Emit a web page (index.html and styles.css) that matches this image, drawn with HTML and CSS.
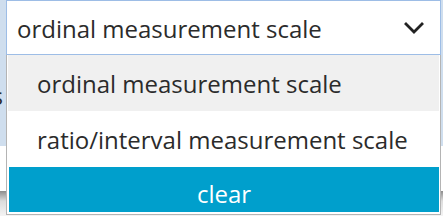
FILE: index.html
```html
<!DOCTYPE html>
<html>
<head>
<meta charset="utf-8">
<link rel="stylesheet" href="styles.css">
</head>
<body>
<div class="page">
  <div class="backdrop">
    <div class="panel"><span class="ghost">s</span></div>
    <div class="gap"></div>
    <div class="footer-bar"></div>
  </div>
  <div class="select">
    <div class="select-box">
      <span class="select-value">ordinal measurement scale</span>
      <svg class="chevron" width="20" height="12" viewBox="0 0 20 12"><path d="M2 2 L10 10 L18 2" fill="none" stroke="#222" stroke-width="2.8" stroke-linecap="square"/></svg>
    </div>
    <ul class="options">
      <li class="option active">ordinal measurement scale</li>
      <li class="option">ratio/interval measurement scale</li>
      <li class="clear"><span>clear</span></li>
    </ul>
  </div>
</div>
</body>
</html>
```
FILE: styles.css
```css
html, body {
  margin: 0;
  padding: 0;
}
body {
  width: 443px;
  height: 216px;
  overflow: hidden;
  font-family: "Open Sans", "Noto Sans", sans-serif;
  color: #2b2b2b;
}
.page {
  position: relative;
  width: 443px;
  height: 216px;
}
.backdrop {
  display: flex;
  flex-direction: column;
  height: 216px;
}
.panel {
  height: 146px;
  background: #cfdeee;
  position: relative;
}
.ghost {
  position: absolute;
  left: -8px;
  top: 80px;
  font-size: 23px;
  color: #2b2b2b;
}
.gap {
  height: 45px;
  background: #ffffff;
}
.footer-bar {
  flex: 1;
  background: linear-gradient(#8c8c8c, #dcdcdc 40%, #f4f4f4);
}
.select {
  position: absolute;
  left: 6px;
  top: 0;
  width: 435px;
}
.select-box {
  box-sizing: border-box;
  height: 55px;
  border: 1px solid #9dbde6;
  background: #fff;
  display: flex;
  align-items: center;
  justify-content: space-between;
  padding: 0 16px 0 10px;
}
.select-value {
  font-size: 24px;
  padding-top: 2px;
}
.chevron {
  display: block;
}
.options {
  list-style: none;
  margin: 0;
  padding: 0 1px 2px 1px;
  box-sizing: border-box;
  width: 435px;
  border: 1px solid #b4b4b4;
  border-top: none;
  background: #fff;
}
.option {
  height: 56px;
  display: flex;
  align-items: center;
  padding-left: 29px;
  font-size: 24px;
}
.option.active {
  background: #f0f0f0;
}
.clear {
  height: 45px;
  margin-left: 1px;
  background: #009fcc;
  color: #fff;
  font-size: 24px;
  display: flex;
  align-items: center;
  justify-content: center;
  padding-top: 8px;
  box-sizing: border-box;
}
```
